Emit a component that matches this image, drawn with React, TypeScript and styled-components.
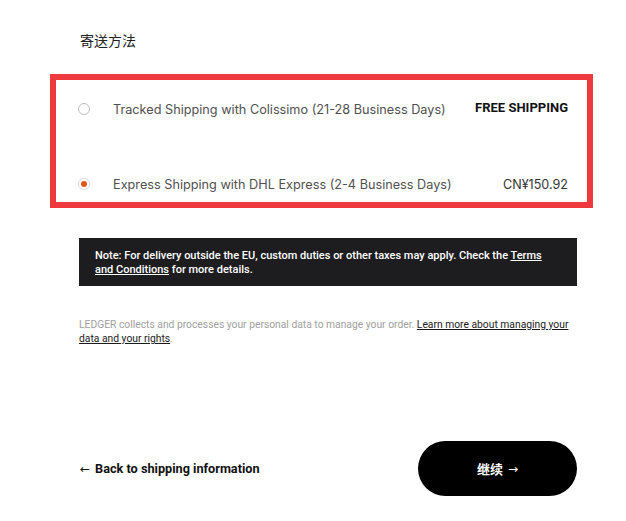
import React from "react";
import styled, { createGlobalStyle } from "styled-components";

const Global = createGlobalStyle`
  html, body { margin: 0; padding: 0; background: #ffffff; }
  body { font-family: Inter, "Noto Sans CJK SC", sans-serif; -webkit-font-smoothing: antialiased; }
  * { box-sizing: border-box; }
`;

const Page = styled.div`
  width: 626px;
  height: 521px;
  padding: 30px 49px 0 79px;
  display: flex;
  flex-direction: column;
  background: #fff;
  overflow: hidden;
`;

const Heading = styled.h2`
  margin: 0 0 24px 1px;
  font-family: "Noto Sans CJK SC", sans-serif;
  font-size: 14px;
  line-height: 20px;
  font-weight: 400;
  color: #222;
`;

const OptionsBox = styled.div`
  margin: 0 -16px 0 -29px;
  border: 6px solid #ee3a3f;
  padding: 17px 19px 6px 22px;
  display: flex;
  flex-direction: column;
  gap: 51px;
`;

const OptionRow = styled.label`
  display: flex;
  align-items: center;
  height: 24px;
  cursor: pointer;
`;

const Radio = styled.span<{ $checked?: boolean }>`
  flex: none;
  width: 12px;
  height: 12px;
  border-radius: 50%;
  border: 1px solid ${(p) => (p.$checked ? "#d9d9d9" : "#bdbdbd")};
  display: flex;
  align-items: center;
  justify-content: center;
  &::after {
    content: "";
    width: 6px;
    height: 6px;
    border-radius: 50%;
    background: ${(p) => (p.$checked ? "#e2561c" : "transparent")};
  }
`;

const OptionLabel = styled.span`
  margin-left: 23px;
  flex: 1;
  font-family: Inter, sans-serif;
  font-size: 12.7px;
  color: #505050;
  white-space: nowrap;
`;

const Price = styled.span<{ $bold?: boolean }>`
  font-family: ${(p) => (p.$bold ? "Roboto, sans-serif" : "Inter, sans-serif")};
  font-size: ${(p) => (p.$bold ? "13px" : "12.6px")};
  font-weight: ${(p) => (p.$bold ? 700 : 400)};
  color: ${(p) => (p.$bold ? "#111" : "#333")};
  white-space: nowrap;
  margin-top: ${(p) => (p.$bold ? "-3px" : "0")};
`;

const Note = styled.div`
  margin-top: 30px;
  background: #1d1d1f;
  padding: 11px 16px 9px;
  font-family: Roboto, sans-serif;
  font-weight: 500;
  font-size: 11px;
  line-height: 14px;
  color: #fff;
`;

const Link = styled.a<{ $light?: boolean }>`
  color: ${(p) => (p.$light ? "#fff" : "#1a1a1a")};
  text-decoration: underline;
  text-underline-offset: 1px;
`;

const Privacy = styled.p`
  margin: 32px 0 0;
  font-family: Roboto, sans-serif;
  font-size: 10.3px;
  line-height: 14px;
  color: #a0a0a0;
`;

const Footer = styled.div`
  margin-top: 95px;
  display: flex;
  align-items: center;
  justify-content: space-between;
`;

const BackLink = styled.a`
  margin-left: 1px;
  display: flex;
  align-items: center;
  gap: 5px;
  font-family: Roboto, sans-serif;
  font-weight: 700;
  font-size: 12.7px;
  color: #111;
  text-decoration: none;
`;

const Arrow = styled.span`
  font-family: "DejaVu Sans", sans-serif;
  font-weight: 400;
  font-size: 12px;
  line-height: 1;
`;

const ContinueButton = styled.button`
  width: 159px;
  height: 55px;
  border: none;
  border-radius: 28px;
  background: #000;
  color: #fff;
  display: flex;
  align-items: center;
  justify-content: center;
  gap: 5px;
  font-family: Roboto, "Noto Sans CJK SC", sans-serif;
  font-weight: 700;
  font-size: 13px;
  cursor: pointer;
`;

export default function App() {
  return (
    <>
      <Global />
      <Page>
        <Heading>寄送方法</Heading>
        <OptionsBox>
          <OptionRow>
            <Radio />
            <OptionLabel>Tracked Shipping with Colissimo (21-28 Business Days)</OptionLabel>
            <Price $bold>FREE SHIPPING</Price>
          </OptionRow>
          <OptionRow>
            <Radio $checked />
            <OptionLabel>Express Shipping with DHL Express (2-4 Business Days)</OptionLabel>
            <Price>CN¥150.92</Price>
          </OptionRow>
        </OptionsBox>
        <Note>
          Note: For delivery outside the EU, custom duties or other taxes may apply. Check the{" "}
          <Link $light href="#">Terms and Conditions</Link> for more details.
        </Note>
        <Privacy>
          LEDGER collects and processes your personal data to manage your order.{" "}
          <Link href="#">Learn more about managing your data and your rights</Link>.
        </Privacy>
        <Footer>
          <BackLink href="#">
            <Arrow>←</Arrow>
            <span>Back to shipping information</span>
          </BackLink>
          <ContinueButton>
            <span>继续</span>
            <Arrow>→</Arrow>
          </ContinueButton>
        </Footer>
      </Page>
    </>
  );
}
